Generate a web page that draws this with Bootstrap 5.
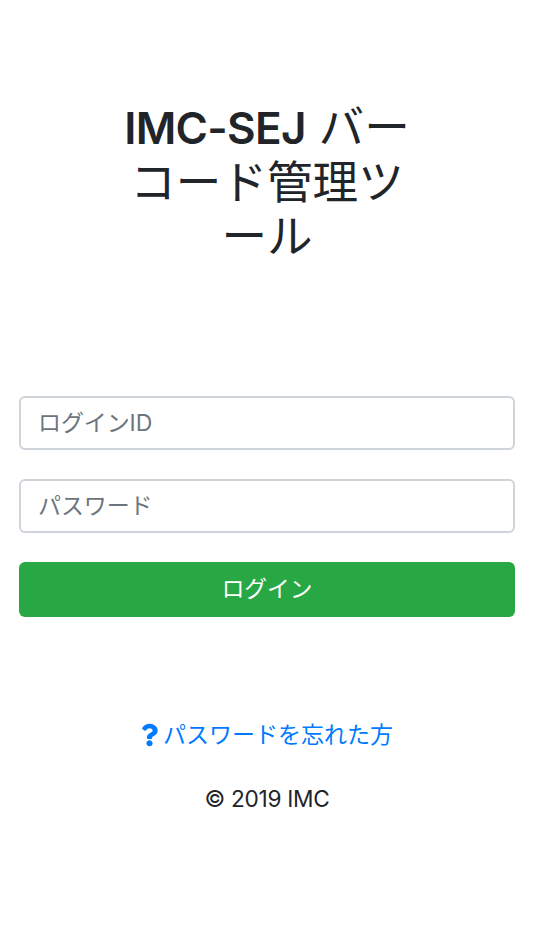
<!DOCTYPE html>
<html lang="ja">
<head>
<meta charset="utf-8">
<title>IMC-SEJ バーコード管理ツール</title>
<link rel="stylesheet" href="https://cdn.jsdelivr.net/npm/bootstrap@5.3.0/dist/css/bootstrap.min.css">
<style>
body{font-family:Inter,"Noto Sans CJK JP",sans-serif;background:#fff;color:#212529;font-size:23px}
.login-wrap{padding:101px 19px 0}
.login-title{width:290px;margin:0 auto 131px;font-size:45.6px;line-height:54.5px;font-weight:400;text-align:center;color:#212529}
.login-title b{font-weight:600;font-size:44px;letter-spacing:-.7px}
.login-input.form-control{height:54px;padding:0 17px;font-size:23px;letter-spacing:-.1px;border:2px solid #ced4da;border-radius:6px;margin-bottom:29px}
.login-input::placeholder{color:#6c757d}
.login-btn.btn{height:55px;width:100%;background:#28a745;border:0;border-radius:6px;color:#fff;font-size:22.7px;padding:0}
.forgot{margin-top:101px;height:34px;color:#007bff;text-decoration:none;line-height:34px}
.forgot svg{width:17px;height:24px;fill:#007bff;margin-right:5px}
.copy{margin-top:30px;color:#212529;line-height:34px;font-size:22.7px;letter-spacing:-.3px}
</style>
</head>
<body>
<main class="login-wrap">
  <h1 class="login-title"><b>IMC-SEJ</b> バーコード管理ツール</h1>
  <form>
    <input class="form-control login-input" type="text" placeholder="ログインID">
    <input class="form-control login-input" type="password" placeholder="パスワード">
    <button class="btn login-btn" type="button">ログイン</button>
  </form>
  <div class="d-flex justify-content-center">
    <a class="forgot d-flex align-items-center" href="#"><svg viewBox="0 0 384 512" aria-hidden="true"><path d="M202.021 0C122.202 0 70.503 32.703 29.914 91.026c-7.363 10.58-5.093 25.086 5.178 32.874l43.138 32.709c10.373 7.865 25.132 6.026 33.253-4.148 25.049-31.381 43.63-49.449 82.757-49.449 30.764 0 68.816 19.799 68.816 49.631 0 22.552-18.617 34.134-48.993 51.164-35.423 19.86-82.299 44.576-82.299 106.405V320c0 13.255 10.745 24 24 24h72.471c13.255 0 24-10.745 24-24v-5.773c0-42.86 125.268-44.645 125.268-160.627C377.504 66.256 286.902 0 202.021 0zM192 373.459c-38.196 0-69.271 31.075-69.271 69.271 0 38.195 31.075 69.27 69.271 69.27s69.271-31.075 69.271-69.271-31.075-69.27-69.271-69.27z"/></svg>パスワードを忘れた方</a>
  </div>
  <p class="copy text-center mb-0">© 2019 IMC</p>
</main>
<script src="https://cdn.jsdelivr.net/npm/bootstrap@5.3.0/dist/js/bootstrap.bundle.min.js"></script>
</body>
</html>
